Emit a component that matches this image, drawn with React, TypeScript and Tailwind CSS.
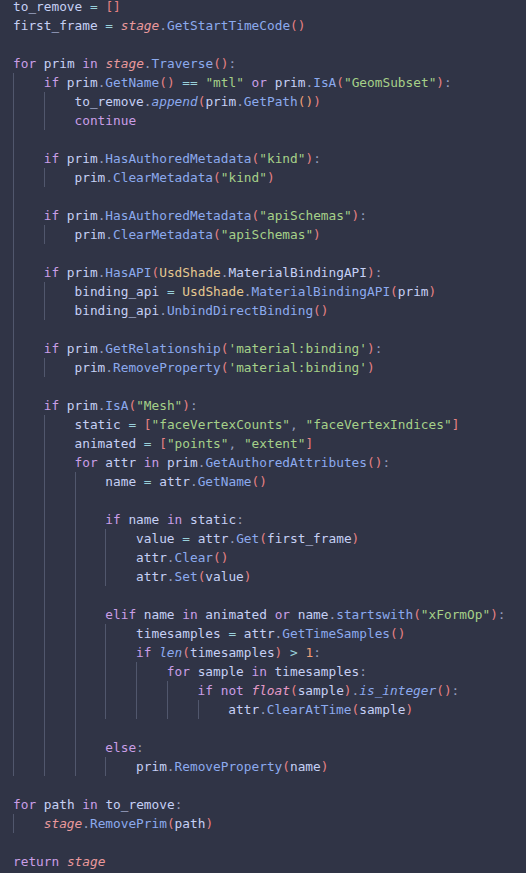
import React from "react";

const CODE = `to_remove = []
first_frame = stage.GetStartTimeCode()
|0
for prim in stage.Traverse():
    if prim.GetName() == "mtl" or prim.IsA("GeomSubset"):
        to_remove.append(prim.GetPath())
        continue
|1
    if prim.HasAuthoredMetadata("kind"):
        prim.ClearMetadata("kind")
|1
    if prim.HasAuthoredMetadata("apiSchemas"):
        prim.ClearMetadata("apiSchemas")
|1
    if prim.HasAPI(UsdShade.MaterialBindingAPI):
        binding_api = UsdShade.MaterialBindingAPI(prim)
        binding_api.UnbindDirectBinding()
|1
    if prim.GetRelationship('material:binding'):
        prim.RemoveProperty('material:binding')
|1
    if prim.IsA("Mesh"):
        static = ["faceVertexCounts", "faceVertexIndices"]
        animated = ["points", "extent"]
        for attr in prim.GetAuthoredAttributes():
            name = attr.GetName()
|3
            if name in static:
                value = attr.Get(first_frame)
                attr.Clear()
                attr.Set(value)
|3
            elif name in animated or name.startswith("xFormOp"):
                timesamples = attr.GetTimeSamples()
                if len(timesamples) > 1:
                    for sample in timesamples:
                        if not float(sample).is_integer():
                            attr.ClearAtTime(sample)
|3
            else:
                prim.RemoveProperty(name)
|0
for path in to_remove:
    stage.RemovePrim(path)
|0
return stage`;

const KW = new Set(["for", "in", "if", "or", "continue", "elif", "else", "return", "not"]);
const BR = ["text-[#e78284]", "text-[#ef9f76]", "text-[#e5c890]"];

type Tok = { t: string; c: string };

function tokenize(src: string): Tok[] {
  const out: Tok[] = [];
  let depth = 0;
  const re = /("[^"]*"|'[^']*')|([A-Za-z_][A-Za-z0-9_]*)|(\d+)|(==|[=><])|([()\[\]])|([.,:])|(\s+)/g;
  let m: RegExpExecArray | null;
  while ((m = re.exec(src))) {
    const s = m[0];
    if (m[1]) out.push({ t: s, c: "text-[#a6d189]" });
    else if (m[2]) {
      const rest = src.slice(re.lastIndex).trimStart();
      const call = rest.startsWith("(");
      let c = "text-[#c6d0f5]";
      if (KW.has(s)) c = "text-[#ca9ee6]";
      else if (s === "stage") c = "text-[#ea999c] italic";
      else if (s === "UsdShade") c = "text-[#e5c890]";
      else if (s === "float") c = "text-[#e59ac6] italic";
      else if (s === "append" || s === "len" || s === "is_integer") c = "text-[#8caaee] italic";
      else if (call) c = "text-[#8caaee]";
      out.push({ t: s, c });
    } else if (m[3]) out.push({ t: s, c: "text-[#ef9f76]" });
    else if (m[4]) out.push({ t: s, c: "text-[#99d1db]" });
    else if (m[5]) {
      if (s === "(" || s === "[") {
        out.push({ t: s, c: BR[depth % 3] });
        depth++;
      } else {
        depth = Math.max(0, depth - 1);
        out.push({ t: s, c: BR[depth % 3] });
      }
    } else if (m[6]) out.push({ t: s, c: "text-[#949cbb]" });
    else out.push({ t: s, c: "" });
  }
  return out;
}

export default function App() {
  const lines = CODE.split("\n").map((raw) => {
    if (raw.startsWith("|")) return { guides: parseInt(raw.slice(1), 10), text: "" };
    const indent = raw.length - raw.trimStart().length;
    return { guides: indent / 4, text: raw.trimStart() };
  });
  return (
    <div
      className="w-full h-[873px] overflow-hidden bg-[#303446] text-[#c6d0f5] text-[12.79px]"
      style={{ fontFamily: '"DejaVu Sans Mono", "Liberation Mono", monospace' }}
    >
      <div className="-mt-[3px] pl-[13px]">
        {lines.map((ln, i) => (
          <div key={i} className="flex h-[19px] leading-[19px] whitespace-pre">
            {Array.from({ length: ln.guides }).map((_, g) => (
              <span key={g} className="inline-block w-[4ch] shrink-0 h-[19px] border-l border-[#51576d]" />
            ))}
            <span>
              {tokenize(ln.text).map((tk, k) => (
                <span key={k} className={tk.c}>
                  {tk.t}
                </span>
              ))}
            </span>
          </div>
        ))}
      </div>
    </div>
  );
}
